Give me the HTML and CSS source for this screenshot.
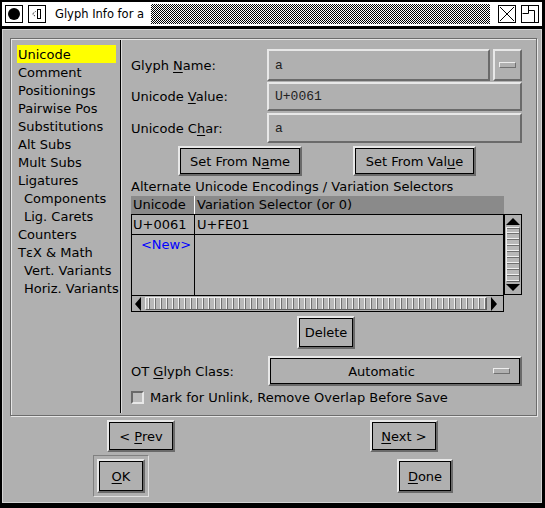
FILE: index.html
```html
<!DOCTYPE html>
<html>
<head>
<meta charset="utf-8">
<link rel="stylesheet" href="styles.css">
</head>
<body>
<div class="win">
  <div class="titlebar">
    <span class="tb-btn"><span class="dot"></span></span>
    <span class="tb-btn"><svg width="16" height="16" viewBox="0 0 16 16"><path d="M6.5 5.5 L3.5 8 L6.5 10.5" fill="none" stroke="#000" stroke-width="1" stroke-dasharray="1 1"/><rect x="8.5" y="3.5" width="3" height="9" fill="none" stroke="#000"/></svg></span>
    <span class="title">Glyph Info for a</span>
    <span class="checker"></span>
    <span class="tb-btn"><svg width="16" height="16" viewBox="0 0 16 16"><path d="M1 1 L15 15 M15 1 L1 15" stroke="#000" stroke-width="1"/></svg></span>
    <span class="tb-btn"><svg width="16" height="16" viewBox="0 0 16 16"><path d="M0.5 7.5 H6.5 V0 M6.5 4.5 H12.5 V16" fill="none" stroke="#000" stroke-width="1"/></svg></span>
  </div>
  <div class="client">
    <div class="frame">
      <ul class="tabs">
        <li class="sel">Unicode</li>
        <li>Comment</li>
        <li>Positionings</li>
        <li>Pairwise Pos</li>
        <li>Substitutions</li>
        <li>Alt Subs</li>
        <li>Mult Subs</li>
        <li>Ligatures</li>
        <li class="sub">Components</li>
        <li class="sub">Lig. Carets</li>
        <li>Counters</li>
        <li>TεX &amp; Math</li>
        <li class="sub">Vert. Variants</li>
        <li class="sub">Horiz. Variants</li>
      </ul>
      <div class="panel">
        <div class="row r1">
          <span class="lbl">Glyph <u>N</u>ame:</span>
          <span class="field">a</span>
          <span class="smallbtn"><span class="ind"></span></span>
        </div>
        <div class="row r2">
          <span class="lbl">Unicode <u>V</u>alue:</span>
          <span class="field">U+0061</span>
        </div>
        <div class="row r3">
          <span class="lbl">Unicode C<u>h</u>ar:</span>
          <span class="field">a</span>
        </div>
        <div class="row btnrow">
          <span class="btn b-name"><span>Set From N<u>a</u>me</span></span>
          <span class="btn b-value"><span>Set From Val<u>u</u>e</span></span>
        </div>
        <div class="caption">Alternate Unicode Encodings / Variation Selectors</div>
        <div class="thead">
          <span class="th1">Unicode</span>
          <span class="th2">Variation Selector (or 0)</span>
        </div>
        <div class="tblrow">
          <div class="tbody">
            <div class="tr first"><span class="td1">U+0061</span><span class="td2">U+FE01</span></div>
            <div class="tr"><span class="td1 new">&lt;New&gt;</span><span class="td2"></span></div>
            <div class="tr fill"><span class="td1"></span><span class="td2"></span></div>
          </div>
          <div class="vscroll">
            <span class="arr up"></span>
            <span class="vthumb"></span>
            <span class="arr down"></span>
          </div>
        </div>
        <div class="hscroll">
          <span class="harr left"></span>
          <span class="hthumb"></span>
          <span class="harr right"></span>
        </div>
        <div class="row delrow">
          <span class="btn b-del">Delete</span>
        </div>
        <div class="row ddrow">
          <span class="lbl lbl2">OT <u>G</u>lyph Class:</span>
          <span class="dropdown"><span class="ddtext">Automatic</span><span class="ind"></span></span>
        </div>
        <div class="row cbrow">
          <span class="cb"></span>
          <span class="cblbl">Mark for Unlink, Remove Overlap Before Save</span>
        </div>
      </div>
    </div>
    <div class="navrow">
      <span class="btn b-prev"><span>&lt; <u>P</u>rev</span></span>
      <span class="btn b-next"><span><u>N</u>ext &gt;</span></span>
    </div>
    <div class="okrow">
      <span class="ring"><span class="btn b-ok"><span><u>O</u>K</span></span></span>
      <span class="btn b-done"><span><u>D</u>one</span></span>
    </div>
  </div>
</div>
</body>
</html>
```

FILE: styles.css
```css
* { box-sizing: border-box; margin: 0; padding: 0; }
html, body { width: 545px; height: 508px; overflow: hidden; background: #000; }
body { font-family: "DejaVu Sans", sans-serif; font-size: 13px; color: #000; }
u { text-decoration: underline; text-underline-offset: 2px; }

.win { width: 545px; height: 508px; background: #000; padding: 2px 3px 5px 2px; display: flex; flex-direction: column; }

.titlebar { height: 24px; flex: none; background: #fff; display: flex; align-items: center; padding: 0 3px; }
.tb-btn { width: 18px; height: 18px; border: 1px solid #000; display: flex; align-items: center; justify-content: center; flex: none; }
.tb-btn + .tb-btn { margin-left: 5px; }
.dot { width: 12px; height: 12px; border-radius: 50%; background: #000; }
.title { margin-left: 9px; font-size: 11.5px; white-space: nowrap; }
.checker { flex: 1; height: 20px; margin: 0 8px 0 7px; background: repeating-conic-gradient(#000 0 25%, #fff 0 50%) 0 0 / 2px 2px; }

.client { margin-top: 3px; flex: 1; background: #b0b0b0; border: 1px solid #d4d4d4; padding: 8px 0 0 7px; }

.frame { width: 527px; height: 378px; border: 1px solid #6c6c6c; box-shadow: 1px 1px 0 #e6e6e6, inset 1px 1px 0 #e6e6e6; display: flex; }

.tabs { width: 110px; flex: none; list-style: none; padding: 5px 0 0 6px; margin: 1px 0 2px; border-right: 1px solid #000; box-shadow: 1px 0 0 #dcdcdc; }
.tabs li { height: 18px; line-height: 19px; width: 99px; padding-left: 1px; white-space: nowrap; }
.tabs li.sub { padding-left: 7px; }
.tabs li.sel { background: #ffff00; }

.panel { flex: 1; padding: 10px 14px 0 10px; display: flex; flex-direction: column; }
.row { display: flex; align-items: center; flex: none; }
.lbl { width: 136px; flex: none; white-space: nowrap; }
.lbl2 { width: 137px; }

.field { flex: 1; height: 100%; border: 2px solid; border-color: #e8e8e8 #6a6a6a #6a6a6a #e8e8e8; font-family: "Liberation Mono", monospace; font-size: 13px; color: #222; padding-left: 6px; display: flex; align-items: center; }
.r1 { height: 32px; }
.r2 { height: 29px; margin-top: 1px; }
.r3 { height: 30px; margin-top: 2px; }
.smallbtn { width: 29px; height: 100%; margin-left: 3px; border: 2px solid; border-color: #e8e8e8 #6a6a6a #6a6a6a #e8e8e8; display: flex; align-items: center; justify-content: center; }
.ind { width: 17px; height: 6px; border: 1px solid; border-color: #eeeeee #707070 #707070 #eeeeee; display: block; flex: none; }

.btn { border: 2px solid; border-color: #e8e8e8 #6a6a6a #6a6a6a #e8e8e8; box-shadow: inset 0 0 0 1px #000; background: #b0b0b0; display: flex; align-items: center; justify-content: center; white-space: pre; flex: none; }
.btnrow { height: 30px; margin-top: 3px; }
.b-name { width: 124px; height: 30px; margin-left: 47px; }
.b-value { width: 123px; height: 30px; margin-left: 51px; }

.caption { height: 18px; line-height: 18px; margin-top: 2px; white-space: nowrap; flex: none; }

.thead { display: flex; width: 373px; height: 18px; line-height: 18px; background: #8a8a8a; flex: none; }
.th1 { width: 64px; padding-left: 2px; border-right: 1px solid #fff; }
.th2 { flex: 1; padding-left: 2px; white-space: nowrap; }

.tblrow { display: flex; height: 81px; flex: none; }
.tbody { width: 373px; border: 1px solid #000; border-bottom: none; display: flex; flex-direction: column; }
.tr { display: flex; height: 20px; line-height: 19px; flex: none; }
.tr.first { height: 20px; border-bottom: 1px solid #000; }
.tr.fill { flex: 1; }
.td1 { width: 63px; border-right: 1px solid #000; padding-left: 1px; }
.td1.new { color: #0000ff; text-align: center; padding-left: 6px; }
.td2 { flex: 1; padding-left: 2px; }

.vscroll { width: 18px; border: 1px solid #000; display: flex; flex-direction: column; align-items: center; padding: 1px 0; }
.arr { width: 0; height: 0; border-left: 7px solid transparent; border-right: 7px solid transparent; flex: none; margin: 2px 0; }
.arr.up { border-bottom: 7px solid #000; }
.arr.down { border-top: 7px solid #000; }
.vthumb { flex: 1; width: 14px; border: 1px solid; border-color: #f0f0f0 #606060 #606060 #f0f0f0; background: repeating-linear-gradient(to bottom, #b8b8b8 0 2px, #f0f0f0 2px 3px, #707070 3px 4px, #b8b8b8 4px 6px); background-position: 0 2px; }

.hscroll { width: 373px; height: 17px; border: 1px solid #000; display: flex; align-items: center; padding: 0 1px; flex: none; }
.harr { width: 0; height: 0; border-top: 7px solid transparent; border-bottom: 7px solid transparent; flex: none; margin: 0 4px; }
.harr.left { border-right: 6px solid #000; margin-left: 2px; }
.harr.right { border-left: 6px solid #000; margin-right: 5px; }
.hthumb { flex: 1; height: 13px; border: 1px solid; border-color: #f0f0f0 #606060 #606060 #f0f0f0; background: repeating-linear-gradient(to right, #b8b8b8 0 2px, #f0f0f0 2px 3px, #707070 3px 4px, #b8b8b8 4px 6px); }

.delrow { height: 33px; margin-top: 4px; }
.b-del { width: 58px; height: 33px; margin-left: 166px; }

.ddrow { height: 30px; margin-top: 7px; }
.dropdown { width: 254px; height: 30px; border: 2px solid; border-color: #e8e8e8 #6a6a6a #6a6a6a #e8e8e8; box-shadow: inset 0 0 0 1px #000; display: flex; align-items: center; padding-right: 10px; }
.ddtext { flex: 1; text-align: center; }

.cbrow { height: 16px; margin-top: 3px; }
.cb { width: 13px; height: 13px; border: 2px solid; border-color: #6a6a6a #e8e8e8 #e8e8e8 #6a6a6a; background: #bcbcbc; flex: none; }
.cblbl { margin-left: 6px; white-space: nowrap; }

.navrow { display: flex; margin-top: 4px; height: 32px; }
.b-prev { width: 68px; height: 32px; margin-left: 97px; }
.b-next { width: 68px; height: 32px; margin-left: 195px; }

.okrow { display: flex; align-items: center; margin-top: 3px; height: 42px; }
.ring { width: 56px; height: 42px; margin-left: 83px; border: 1px solid; border-color: #808080 #e0e0e0 #e0e0e0 #808080; padding: 3px; display: flex; }
.b-ok { width: 48px; height: 34px; }
.b-done { width: 56px; height: 34px; margin-left: 248px; }
```
